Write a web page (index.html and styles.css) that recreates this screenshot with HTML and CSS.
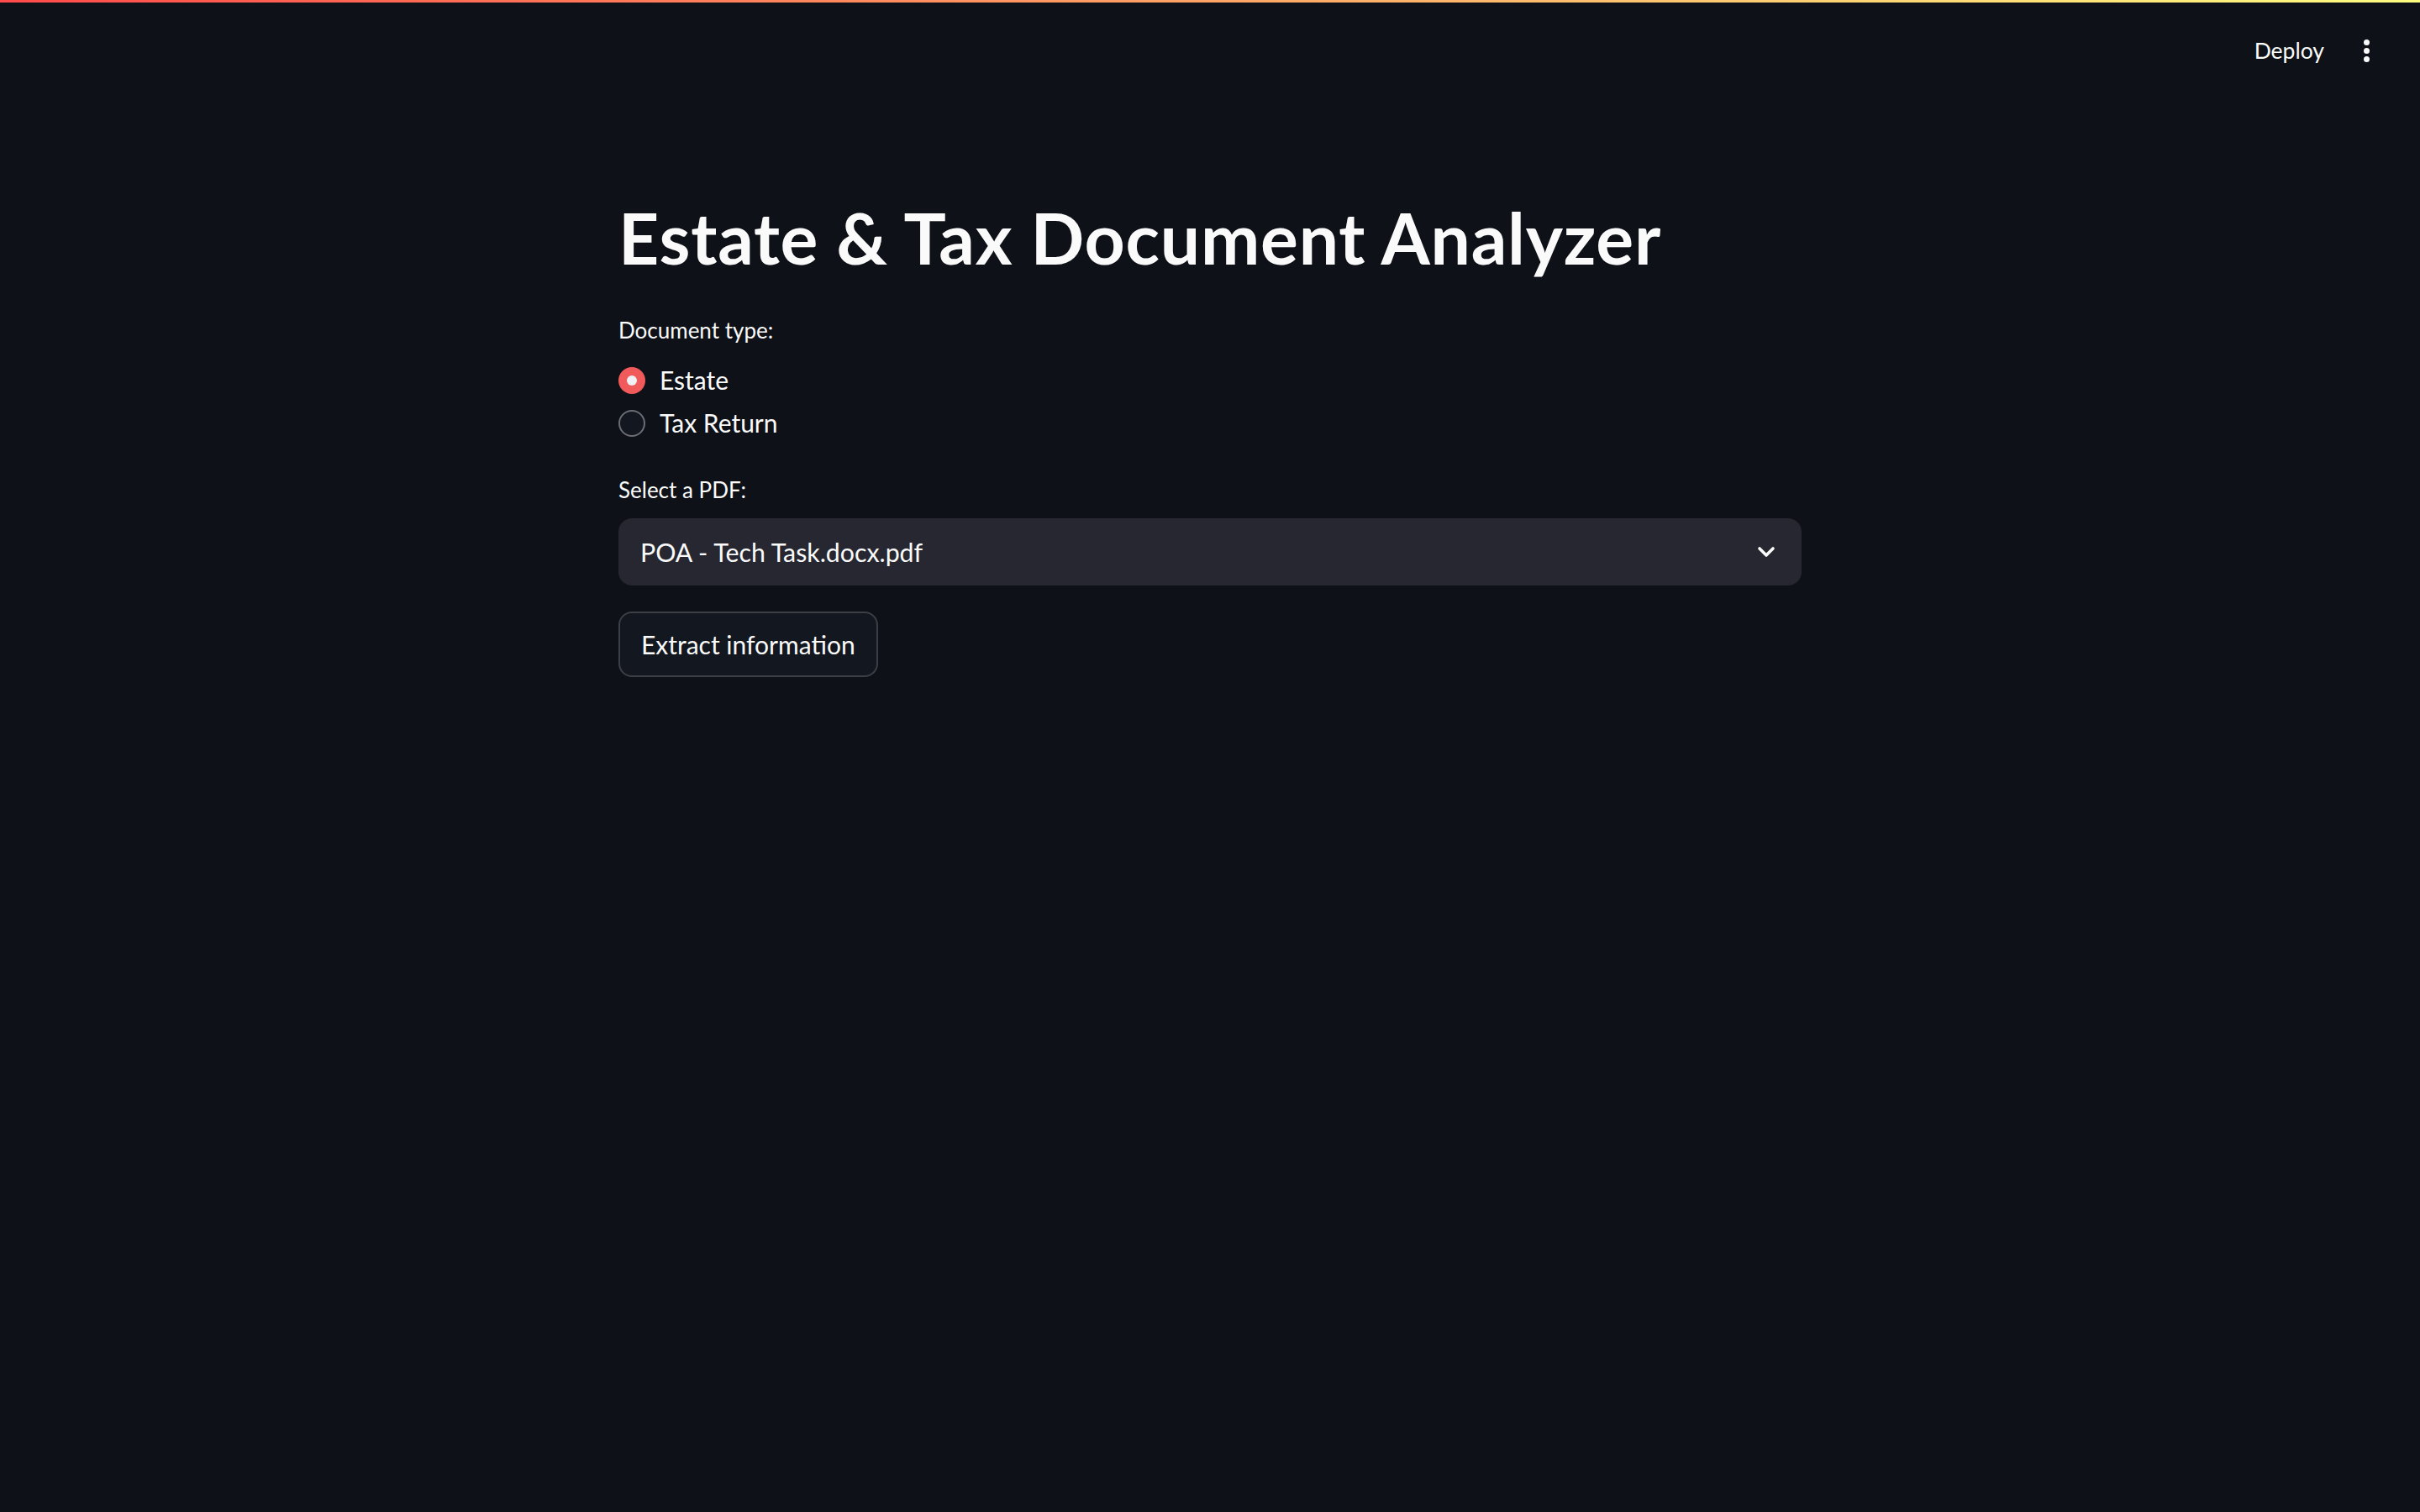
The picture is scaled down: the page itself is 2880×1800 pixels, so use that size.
FILE: index.html
```html
<!DOCTYPE html>
<html lang="en">
<head>
<meta charset="utf-8">
<title>Estate &amp; Tax Document Analyzer</title>
<link rel="stylesheet" href="styles.css">
</head>
<body>
<div class="decoration"></div>
<header class="topbar">
  <span class="deploy">Deploy</span>
  <span class="kebab"><i></i><i></i><i></i></span>
</header>
<main class="block">
  <h1 class="title">Estate &amp; Tax Document Analyzer</h1>
  <div class="label first">Document type:</div>
  <div class="radio-group">
    <div class="radio-row"><span class="radio checked"></span><span class="radio-text">Estate</span></div>
    <div class="radio-row"><span class="radio"></span><span class="radio-text">Tax Return</span></div>
  </div>
  <div class="label second">Select a PDF:</div>
  <div class="select">
    <span class="select-value">POA - Tech Task.docx.pdf</span>
    <svg class="chevron" width="22" height="14" viewBox="0 0 22 14"><path d="M3 3 L11 11 L19 3" fill="none" stroke="#fafafa" stroke-width="3.6" stroke-linecap="round" stroke-linejoin="round"/></svg>
  </div>
  <div class="btn-row"><button class="btn">Extract information</button></div>
</main>
</body>
</html>
```
FILE: styles.css
```css
html, body {
  margin: 0;
  padding: 0;
  background: #0e1117;
  color: #fafafa;
  font-family: Lato, "Open Sans", sans-serif;
  height: 100%;
}
.decoration {
  height: 3px;
  background: linear-gradient(90deg, #ff4b4b, #fffd80);
}
.topbar {
  display: flex;
  justify-content: flex-end;
  align-items: center;
  height: 40px;
  padding: 37px 63px 0 0;
  gap: 47px;
}
.deploy {
  font-size: 26.5px;
  line-height: 40px;
}
.kebab {
  display: flex;
  flex-direction: column;
  gap: 3px;
  margin-right: -3px;
}
.kebab i {
  display: block;
  width: 7px;
  height: 7px;
  border-radius: 50%;
  background: #fafafa;
}
.block {
  width: 1408px;
  margin: 0 auto;
  padding-top: 153px;
}
.title {
  margin: 0;
  font-size: 84px;
  line-height: 100px;
  font-weight: 700;
  letter-spacing: 0.75px;
}
.label {
  font-size: 26px;
  line-height: 40px;
}
.label.first { margin-top: 40px; }
.label.second { margin-top: 34px; }
.radio-group {
  margin-top: 14px;
  display: flex;
  flex-direction: column;
}
.radio-row {
  display: flex;
  align-items: center;
  height: 51px;
}
.radio {
  box-sizing: border-box;
  width: 32px;
  height: 32px;
  border-radius: 50%;
  border: 2px solid #6b6d73;
  background: #131720;
  display: flex;
  align-items: center;
  justify-content: center;
  margin-right: 17px;
}
.radio.checked {
  border: none;
  background: #f05a5a;
}
.radio.checked::after {
  content: "";
  width: 12px;
  height: 12px;
  border-radius: 50%;
  background: #f0f0f5;
}
.radio-text {
  font-size: 30px;
  line-height: 51px;
}
.select {
  margin-top: 14px;
  height: 80px;
  background: #262730;
  border-radius: 16px;
  display: flex;
  align-items: center;
  justify-content: space-between;
  padding: 0 31px 0 26px;
}
.select-value {
  font-size: 30.3px;
  line-height: 40px;
}
.btn-row {
  margin-top: 31px;
}
.btn {
  box-sizing: border-box;
  height: 78px;
  padding: 0 25px;
  background: #131720;
  color: #fafafa;
  border: 2px solid #3d3f47;
  border-radius: 16px;
  font-family: Lato, "Open Sans", sans-serif;
  font-size: 30px;
  line-height: 40px;
}
```
